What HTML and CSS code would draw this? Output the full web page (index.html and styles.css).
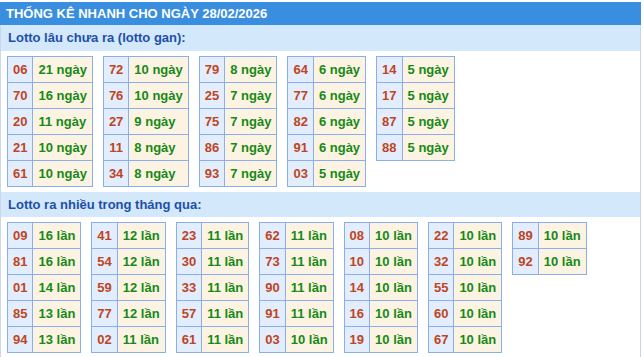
FILE: index.html
```html
<!DOCTYPE html>
<html>
<head>
<meta charset="utf-8">
<link rel="stylesheet" href="styles.css">
</head>
<body>
<div class="box">
  <div class="head">THỐNG KÊ NHANH CHO NGÀY 28/02/2026</div>
  <div class="sub">Lotto lâu chưa ra (lotto gan):</div>
  <div class="tables">
    <table class="t"><tr><td class="n">06</td><td class="v">21 ngày</td></tr><tr><td class="n">70</td><td class="v">16 ngày</td></tr><tr><td class="n">20</td><td class="v">11 ngày</td></tr><tr><td class="n">21</td><td class="v">10 ngày</td></tr><tr><td class="n">61</td><td class="v">10 ngày</td></tr></table>
    <table class="t"><tr><td class="n">72</td><td class="v">10 ngày</td></tr><tr><td class="n">76</td><td class="v">10 ngày</td></tr><tr><td class="n">27</td><td class="v">9 ngày</td></tr><tr><td class="n">11</td><td class="v">8 ngày</td></tr><tr><td class="n">34</td><td class="v">8 ngày</td></tr></table>
    <table class="t"><tr><td class="n">79</td><td class="v">8 ngày</td></tr><tr><td class="n">25</td><td class="v">7 ngày</td></tr><tr><td class="n">75</td><td class="v">7 ngày</td></tr><tr><td class="n">86</td><td class="v">7 ngày</td></tr><tr><td class="n">93</td><td class="v">7 ngày</td></tr></table>
    <table class="t"><tr><td class="n">64</td><td class="v">6 ngày</td></tr><tr><td class="n">77</td><td class="v">6 ngày</td></tr><tr><td class="n">82</td><td class="v">6 ngày</td></tr><tr><td class="n">91</td><td class="v">6 ngày</td></tr><tr><td class="n">03</td><td class="v">5 ngày</td></tr></table>
    <table class="t"><tr><td class="n">14</td><td class="v">5 ngày</td></tr><tr><td class="n">17</td><td class="v">5 ngày</td></tr><tr><td class="n">87</td><td class="v">5 ngày</td></tr><tr><td class="n">88</td><td class="v">5 ngày</td></tr></table>
  </div>
  <div class="sub sub2">Lotto ra nhiều trong tháng qua:</div>
  <div class="tables">
    <table class="t"><tr><td class="n">09</td><td class="v">16 lần</td></tr><tr><td class="n">81</td><td class="v">16 lần</td></tr><tr><td class="n">01</td><td class="v">14 lần</td></tr><tr><td class="n">85</td><td class="v">13 lần</td></tr><tr><td class="n">94</td><td class="v">13 lần</td></tr></table>
    <table class="t"><tr><td class="n">41</td><td class="v">12 lần</td></tr><tr><td class="n">54</td><td class="v">12 lần</td></tr><tr><td class="n">59</td><td class="v">12 lần</td></tr><tr><td class="n">77</td><td class="v">12 lần</td></tr><tr><td class="n">02</td><td class="v">11 lần</td></tr></table>
    <table class="t"><tr><td class="n">23</td><td class="v">11 lần</td></tr><tr><td class="n">30</td><td class="v">11 lần</td></tr><tr><td class="n">33</td><td class="v">11 lần</td></tr><tr><td class="n">57</td><td class="v">11 lần</td></tr><tr><td class="n">61</td><td class="v">11 lần</td></tr></table>
    <table class="t"><tr><td class="n">62</td><td class="v">11 lần</td></tr><tr><td class="n">73</td><td class="v">11 lần</td></tr><tr><td class="n">90</td><td class="v">11 lần</td></tr><tr><td class="n">91</td><td class="v">11 lần</td></tr><tr><td class="n">03</td><td class="v">10 lần</td></tr></table>
    <table class="t"><tr><td class="n">08</td><td class="v">10 lần</td></tr><tr><td class="n">10</td><td class="v">10 lần</td></tr><tr><td class="n">14</td><td class="v">10 lần</td></tr><tr><td class="n">16</td><td class="v">10 lần</td></tr><tr><td class="n">19</td><td class="v">10 lần</td></tr></table>
    <table class="t"><tr><td class="n">22</td><td class="v">10 lần</td></tr><tr><td class="n">32</td><td class="v">10 lần</td></tr><tr><td class="n">55</td><td class="v">10 lần</td></tr><tr><td class="n">60</td><td class="v">10 lần</td></tr><tr><td class="n">67</td><td class="v">10 lần</td></tr></table>
    <table class="t"><tr><td class="n">89</td><td class="v">10 lần</td></tr><tr><td class="n">92</td><td class="v">10 lần</td></tr></table>
  </div>
</div>
</body>
</html>
```
FILE: styles.css
```css
html, body {
  margin: 0;
  padding: 0;
  background: #ffffff;
}
body {
  padding-top: 2px;
  font-family: "Liberation Sans", Arial, sans-serif;
}
.box {
  width: 639px;
  border-left: 1px solid #c9d7e8;
  border-right: 1px solid #c9d7e8;
}
.head {
  background: #3a8ee0;
  color: #ffffff;
  font-weight: bold;
  font-size: 13px;
  height: 23px;
  line-height: 23px;
  padding-left: 6px;
  margin: 0 -1px;
}
.sub {
  background: #d4e8fc;
  color: #1d4faa;
  font-weight: bold;
  font-size: 13px;
  height: 26px;
  line-height: 26px;
  padding-left: 7px;
}
.sub2 {
  height: 25px;
  line-height: 25px;
}
.tables {
  display: flex;
  align-items: flex-start;
  gap: 10px;
  padding: 5px 6px;
}
.t {
  border-collapse: collapse;
  font-size: 13px;
  font-weight: bold;
}
.t td {
  border: 1px solid #8aaef0;
  padding: 5px;
  height: 15px;
  line-height: 15px;
  white-space: nowrap;
}
.n {
  background: #e2eefd;
  color: #c0441e;
  text-align: center;
}
.v {
  background: #fdf3e2;
  color: #168a16;
}
```
